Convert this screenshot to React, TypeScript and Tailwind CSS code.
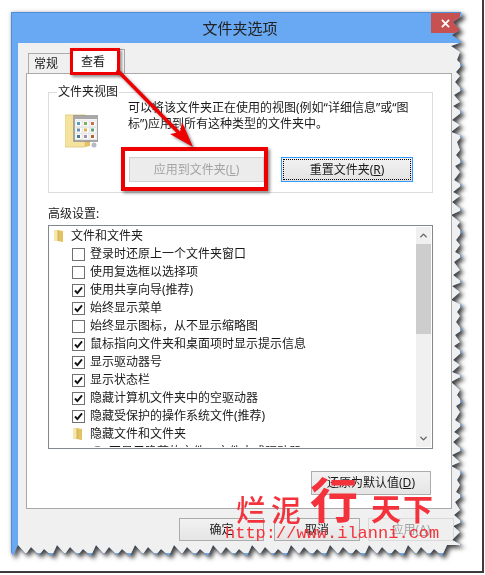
import { ChevronDown, ChevronUp } from "lucide-react"

const rows = [
  { label: "登录时还原上一个文件夹窗口", checked: false },
  { label: "使用复选框以选择项", checked: false },
  { label: "使用共享向导(推荐)", checked: true },
  { label: "始终显示菜单", checked: true },
  { label: "始终显示图标，从不显示缩略图", checked: false },
  { label: "鼠标指向文件夹和桌面项时显示提示信息", checked: true },
  { label: "显示驱动器号", checked: true },
  { label: "显示状态栏", checked: true },
  { label: "隐藏计算机文件夹中的空驱动器", checked: true },
  { label: "隐藏受保护的操作系统文件(推荐)", checked: true },
]

// torn paper edge of the screenshot effect
function tornEdge(w: number, h: number) {
  const pts: string[] = ["0px 0px", `${w - 2}px 0px`]
  let y = 0
  let i = 0
  while (y < h - 14) {
    y += 4 + ((i * 7) % 5)
    const out = i % 2 === 0
    const x = out ? w - 1 - ((i * 5) % 4) : w - 6 - ((i * 11) % 7)
    pts.push(`${x}px ${y}px`)
    i++
  }
  let x = w - 8
  while (x > 6) {
    x -= 5 + ((i * 3) % 6)
    const out = i % 2 === 0
    const py = out ? h - ((i * 5) % 3) : h - 6 - ((i * 7) % 6)
    pts.push(`${x}px ${py}px`)
    i++
  }
  pts.push(`0px ${h - 4}px`)
  return `polygon(${pts.join(",")})`
}

function Folder({ className }: { className?: string }) {
  return (
    <svg viewBox="0 0 11 14" className={className}>
      <path d="M1 1h5l4 1v11l-4-1H1z" fill="#f0d98a" />
      <path d="M5 2l5 0v11l-5-1z" fill="#e2c262" />
      <path d="M1 1h4v11H1z" fill="#f6e7ac" />
      <path d="M5 1v11" stroke="#c9a94e" strokeWidth="0.8" />
    </svg>
  )
}

function Checkbox({ checked }: { checked: boolean }) {
  return (
    <span className="flex h-[13px] w-[13px] shrink-0 items-center justify-center border border-[#707070] bg-white">
      {checked && (
        <svg viewBox="0 0 11 11" className="h-[11px] w-[11px]">
          <path d="M2 5.5l2.4 2.6L9 2.4" fill="none" stroke="#111" strokeWidth="1.9" />
        </svg>
      )}
    </span>
  )
}

function FolderViewIcon() {
  const colors = ["#5a9bb5", "#7fae5c", "#c9704a", "#6b8fb0", "#e0b04a", "#5aa070", "#4a7d8c", "#9a8fb5", "#b5622f"]
  return (
    <svg viewBox="0 0 33 34" className="mt-[14px] ml-4 h-[34px] w-[33px] shrink-0">
      <path d="M0 1h20v32H0z" fill="#f5e29c" stroke="#e3cf8b" />
      <path d="M20 26h5v6l-5 1z" fill="#e2c262" />
      <rect x="9" y="2" width="24" height="25" fill="#f4f4f4" stroke="#8e8e8e" strokeWidth="1.5" />
      <rect x="9" y="2" width="24" height="3" fill="#a8a8a8" />
      {colors.map((c, i) => (
        <g key={c}>
          <rect x={11 + (i % 3) * 7} y={7 + Math.floor(i / 3) * 6.5} width="6" height="5.5" fill="#fff" stroke="#d5d5d5" strokeWidth="0.5" />
          <rect x={12 + (i % 3) * 7} y={8 + Math.floor(i / 3) * 6.5} width="3" height="3" fill={c} />
        </g>
      ))}
      <circle cx="29" cy="31" r="2.5" fill="#b8b8c4" />
    </svg>
  )
}

export default function App() {
  return (
    <div
      className="relative h-[575px] w-[485px] overflow-hidden bg-white text-[12px] leading-4 text-[#1a1a1a]"
      style={{ fontFamily: '"Noto Sans", "Noto Sans CJK SC", sans-serif' }}
    >
      <div className="h-[573px] w-[484px] border-r-2 border-b-2 border-[#3c3c3c] pt-3 pl-[11px]">
        <div className="w-[452px] [filter:drop-shadow(0_0_2px_rgba(0,0,0,.2))_drop-shadow(3px_3px_2px_rgba(0,0,0,.7))]">
          <div
            className="h-[544px] w-[452px] border-t border-l border-[#4f8ed6] bg-[#69a8f2]"
            style={{ clipPath: tornEdge(452, 544) }}
          >
            {/* title bar */}
            <div className="flex h-[30px] items-start">
              <div className="mt-[5px] flex-1 pl-[37px] text-center text-[15px] leading-5 text-[#222]">文件夹选项</div>
              <div className="mr-[3px] flex h-5 w-[29px] items-center justify-center bg-[#c75050]">
                <svg viewBox="0 0 10 10" className="h-[9px] w-[9px]">
                  <path d="M1 1l8 8M9 1l-8 8" stroke="#fff" strokeWidth="2" />
                </svg>
              </div>
            </div>

            <div className="ml-[6px] h-[510px] w-[442px] bg-[#f0f0f0] pt-[6px] pl-2">
              {/* tabs */}
              <div className="flex h-6 items-end pl-[2px]">
                <div className="flex h-5 w-[43px] items-center border-t border-l border-[#acacac] bg-[#f0f0f0] pl-[5px]">常规</div>
                <div className="-ml-px flex h-6 w-[55px] items-center border-x border-t border-[#acacac] bg-white pl-[10px]">查看</div>
              </div>

              <div className="h-[436px] w-[426px] border border-[#a9a9a9] bg-white pl-[21px]">
                <fieldset className="mt-[10px] w-[385px] border border-[#dcdcdc] pb-[10px]">
                  <legend className="ml-2 px-px">文件夹视图</legend>
                  <div className="flex">
                    <FolderViewIcon />
                    <div className="ml-[30px] w-[300px]">
                      <p className="whitespace-nowrap">
                        可以将该文件夹正在使用的视图(例如“详细信息”或“图
                        <br />
                        标”)应用到所有这种类型的文件夹中。
                      </p>
                      <div className="mt-[25px] ml-px flex gap-[17px]">
                        <button className="h-[25px] w-[135px] border border-[#d0d0d0] bg-[#ececec] text-[#a3a3a3]">
                          应用到文件夹(<span className="underline">L</span>)
                        </button>
                        <button className="h-[25px] w-[132px] border border-[#3399ff] bg-gradient-to-b from-[#f2f2f2] to-[#e3e3e3] p-px">
                          <span className="flex h-full w-full items-center justify-center border border-dotted border-black">
                            重置文件夹(<span className="underline">R</span>)
                          </span>
                        </button>
                      </div>
                    </div>
                  </div>
                </fieldset>

                <div className="mt-[13px] mb-[3px]">高级设置:</div>

                <div className="flex h-[224px] w-[385px] border border-[#828790] p-px">
                  <div className="flex-1 overflow-hidden">
                    <div className="flex h-[18px] items-center gap-[7px] pl-[3px]">
                      <Folder className="h-[14px] w-[11px]" />
                      <span>文件和文件夹</span>
                    </div>
                    {rows.map((row) => (
                      <div key={row.label} className="flex h-[18px] items-center gap-[5px] pl-[22px]">
                        <Checkbox checked={row.checked} />
                        <span>{row.label}</span>
                      </div>
                    ))}
                    <div className="flex h-[18px] items-center gap-[7px] pl-[22px]">
                      <Folder className="h-[14px] w-[11px]" />
                      <span>隐藏文件和文件夹</span>
                    </div>
                    <div className="flex h-[18px] items-center gap-[5px] pl-[41px]">
                      <span className="h-[13px] w-[13px] shrink-0 rounded-full border border-[#707070]" />
                      <span>不显示隐藏的文件、文件夹或驱动器</span>
                    </div>
                  </div>
                  {/* scrollbar */}
                  <div className="flex w-[15px] flex-col bg-[#f0f0f0]">
                    <div className="flex h-[17px] items-center justify-center">
                      <ChevronUp size={11} strokeWidth={3} className="text-[#606060]" />
                    </div>
                    <div className="h-[90px] bg-[#cdcdcd]" />
                    <div className="flex-1" />
                    <div className="flex h-[17px] items-center justify-center">
                      <ChevronDown size={11} strokeWidth={3} className="text-[#606060]" />
                    </div>
                  </div>
                </div>

                <button className="mt-[22px] ml-[263px] block h-6 w-[120px] border border-[#acacac] bg-gradient-to-b from-[#f2f2f2] to-[#e5e5e5]">
                  还原为默认值(<span className="underline">D</span>)
                </button>
              </div>

              {/* dialog buttons */}
              <div className="mt-[9px] ml-[153px] flex">
                <button className="h-[23px] w-[85px] border border-[#acacac] bg-gradient-to-b from-[#f2f2f2] to-[#e5e5e5]">确定</button>
                <button className="ml-[10px] h-[23px] w-[86px] border border-[#acacac] bg-gradient-to-b from-[#f2f2f2] to-[#e5e5e5]">取消</button>
                <button className="ml-2 h-[23px] w-[86px] border border-[#d9d9d9] bg-[#efefef] text-[#a3a3a3]">
                  应用(<span className="underline">A</span>)
                </button>
              </div>
            </div>
          </div>
        </div>
      </div>

      {/* red annotations drawn over the screenshot */}
      <div className="absolute top-[48px] left-[70px] h-[27px] w-[50px] border-[3px] border-[#ee0000] shadow-[2px_2px_3px_rgba(0,0,0,0.45)]" />
      <div className="absolute top-[147px] left-[121px] h-[44px] w-[147px] border-[4px] border-[#ee0000] shadow-[2px_2px_3px_rgba(0,0,0,0.45)]" />
      <svg viewBox="0 0 485 575" className="pointer-events-none absolute top-0 left-0 h-[575px] w-[485px]">
        <g className="[filter:drop-shadow(2px_2px_1.5px_rgba(0,0,0,.45))]">
          <path d="M117 70L183 137" stroke="#ee0000" strokeWidth="3.5" fill="none" />
          <path d="M193 147L170 134L180 132L182 122z" fill="#ee0000" />
        </g>
      </svg>

      {/* site watermark */}
      <div className="absolute top-[491px] left-[236px] font-['Noto_Sans_CJK_SC'] text-[30px] leading-[34px] font-medium text-[#f4323c]">烂</div>
      <div className="absolute top-[491px] left-[271px] font-['Noto_Sans_CJK_SC'] text-[30px] leading-[34px] font-medium text-[#f4323c]">泥</div>
      <div className="absolute top-[471px] left-[310px] font-['Noto_Sans_CJK_SC'] text-[48px] leading-[52px] font-bold text-[#f4323c]">行</div>
      <div className="absolute top-[490px] left-[371px] font-['Noto_Sans_CJK_SC'] text-[30px] leading-[34px] font-bold text-[#f4323c]">天</div>
      <div className="absolute top-[490px] left-[403px] font-['Noto_Sans_CJK_SC'] text-[30px] leading-[34px] font-bold text-[#f4323c]">下</div>
      <div className="absolute top-[524px] left-[225px] font-['Liberation_Mono'] text-[17px] leading-5 text-[#f4323c]">
        http://www.ilanni.com
      </div>
    </div>
  )
}
